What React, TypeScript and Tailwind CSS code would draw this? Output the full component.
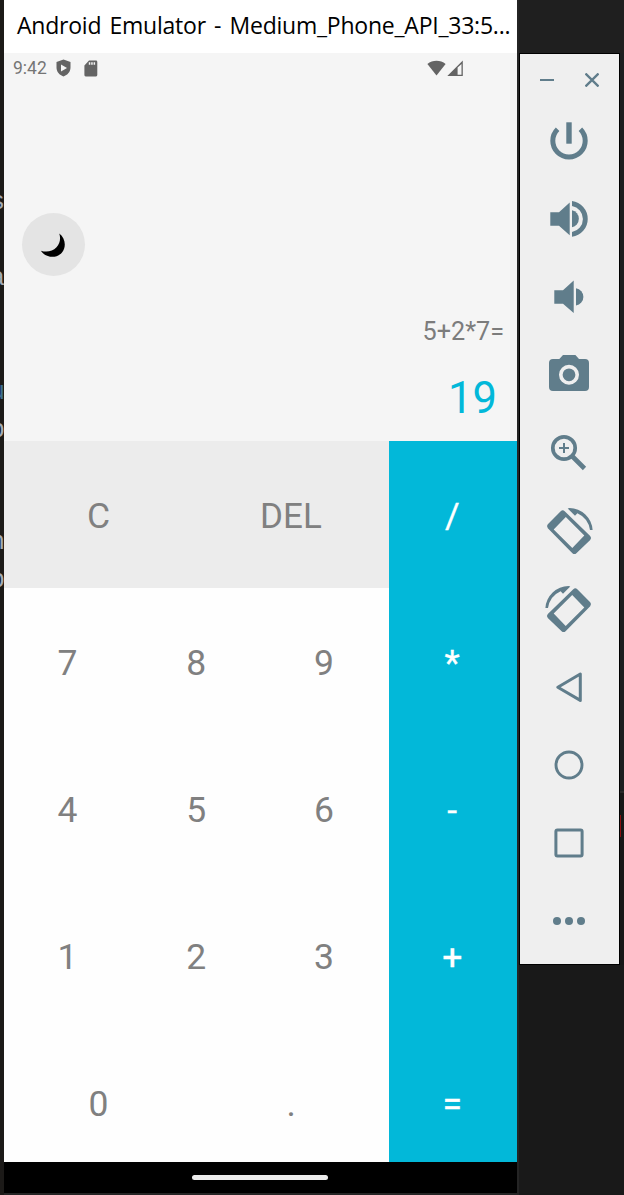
import type { ReactNode } from "react";

const keys: { label: string; nudge: string }[][] = [
  [
    { label: "7", nudge: "pr-[2px]" },
    { label: "8", nudge: "pr-[1px]" },
    { label: "9", nudge: "pr-[1px]" },
  ],
  [
    { label: "4", nudge: "pr-[2px]" },
    { label: "5", nudge: "pr-[1px]" },
    { label: "6", nudge: "pr-[1px]" },
  ],
  [
    { label: "1", nudge: "pr-[2px]" },
    { label: "2", nudge: "pr-[1px]" },
    { label: "3", nudge: "pr-[1px]" },
  ],
  [
    { label: "0", nudge: "pr-[4px]" },
    { label: ".", nudge: "pr-[3px]" },
  ],
];

const operators = ["/", "*", "-", "+", "="];

function Tool({ children }: { children: ReactNode }) {
  return (
    <button className="flex h-[78px] w-full items-center justify-center pr-[2px]">
      <svg width="48" height="48" viewBox="0 0 48 48" fill="#607d8b" className="overflow-visible">
        {children}
      </svg>
    </button>
  );
}

function RotateShape() {
  return (
    <>
      <path
        fillRule="evenodd"
        d="M15.7 4.2Q17.7 2.3 19.7 4.2L45.2 29Q47 31 45.2 33L31.4 46.2Q29.4 48 27.4 46.2L2.8 21.3Q1 19.3 2.8 17.3ZM20.8 10L8.7 22.5L27.3 41L39.3 28.6Z"
      />
      <path d="M22.7 1.5L30 8.7L32.4 6.2A22 22 0 0 1 45 23H47.6A23.5 23.5 0 0 0 24.5 1Z" />
    </>
  );
}

function TitleBar() {
  return (
    <header className="flex h-[53px] shrink-0 items-start bg-white pl-[13px]">
      <h1 className="whitespace-nowrap font-['Open_Sans','Noto_Sans',sans-serif] text-[23px] leading-[51px] tracking-[-0.23px] text-black [word-spacing:2.5px]">
        Android Emulator - Medium_Phone_API_33:5...
      </h1>
    </header>
  );
}

function StatusBar() {
  return (
    <div className="flex h-[30px] shrink-0 items-center pl-[9px] pr-[54px] text-[#646464]">
      <span className="w-[43px] text-[17.5px] leading-[30px] text-[#757575]">9:42</span>
      <svg width="15" height="18" viewBox="0 0 15 18" fill="currentColor">
        <path fillRule="evenodd" d="M7.5 .4L14.5 3V8.5C14.5 13 11.5 16 7.5 17.4C3.5 16 .5 13 .5 8.5V3ZM5 5.4V12.4L11 8.9Z" />
      </svg>
      <svg width="14" height="17" viewBox="0 0 14 17" fill="currentColor" className="ml-[13px]">
        <path fillRule="evenodd" d="M5 .6H12Q13.3 .6 13.3 2V15Q13.3 16.4 12 16.4H1.7Q.4 16.4 .4 15V5.4ZM4.800 2.300V4.800H6.300V2.300ZM7.200 2.300V4.800H8.700V2.300ZM9.600 2.300V4.800H11.100V2.300Z" />
      </svg>
      <svg width="20" height="17" viewBox="0 0 20 17" fill="currentColor" className="ml-auto">
        <path d="M9.500 15.500L.4 4C5.500 -.2 13.500 -.2 18.600 4Z" />
      </svg>
      <svg width="16" height="17" viewBox="0 0 16 17" fill="currentColor">
        <path fillRule="evenodd" d="M15.800 .4V16H.3ZM10.600 7.600V14.700H14.500V3.900Z" />
      </svg>
    </div>
  );
}

function Display() {
  return (
    <section className="flex h-[388px] shrink-0 flex-col bg-[#f5f5f5]">
      <StatusBar />
      <button className="ml-[18px] mt-[130px] flex size-[63px] shrink-0 items-center justify-center rounded-full bg-[#e4e4e4] pr-[1px]">
        <svg width="26" height="26" viewBox="0 0 26 26">
          <path d="M19.300 1.400C25.500 6 26.500 15 22 20.500C16.500 27 5.500 26 .9 18.700C6.500 20.600 12.500 19.500 16.500 15.300C20 11.500 20.900 6.500 19.300 1.400Z" />
        </svg>
      </button>
      <p className="mt-[41px] pr-[13px] text-right text-[25.2px] leading-[30px] text-[#7c7c7c]">5+2*7=</p>
      <p className="mt-[26px] pr-[20px] text-right text-[43.5px] leading-[52px] text-[#02b8d9]">19</p>
    </section>
  );
}

function Keypad() {
  return (
    <section className="flex h-[721px] shrink-0 overflow-hidden text-[35.5px] leading-[147px] text-[#808080]">
      <div className="flex w-[384.5px] shrink-0 flex-col bg-[#fefefe]">
        <div className="grid h-[147px] shrink-0 grid-cols-2 bg-[#ececec] text-center">
          <button className="pr-[3px] pt-[2px]">C</button>
          <button className="pr-[3px] pt-[2px] text-[35px]">DEL</button>
        </div>
        {keys.map((row, i) => (
          <div key={i} className="flex h-[147px] shrink-0">
            {row.map((k) => (
              <button key={k.label} className={`flex-1 basis-0 pt-[2px] ${k.nudge}`}>
                {k.label}
              </button>
            ))}
          </div>
        ))}
      </div>
      <div className="flex flex-1 flex-col bg-[#02b8d9] text-white">
        {operators.map((o) => (
          <button key={o} className="h-[147px] shrink-0 pr-[1px] pt-[2px] [-webkit-text-stroke:0.3px_white]">
            {o}
          </button>
        ))}
      </div>
    </section>
  );
}

function Toolbar() {
  return (
    <aside className="h-[912px] w-[101px] border border-black bg-[#efefef]">
      <div className="flex h-[48px] items-center gap-[31px] pl-[20px] pt-[4px]">
        <svg width="14" height="14" viewBox="0 0 14 14" stroke="#607d8b" strokeWidth="2">
          <path d="M0 7H14" />
        </svg>
        <svg width="14" height="14" viewBox="0 0 14 14" stroke="#607d8b" strokeWidth="2.3">
          <path d="M.5 .5L13.5 13.5M13.5 .5L.5 13.5" />
        </svg>
      </div>
      <Tool>
        <path d="M12.600 12.300A16.200 16.200 0 1 0 35.400 12.300" fill="none" stroke="#607d8b" strokeWidth="5" />
        <rect x="21.300" y="5.300" width="5.400" height="21.400" />
      </Tool>
      <Tool>
        <path d="M5.300 17.300H14L24.700 7.500V40.300L14 30.700H5.300Z" />
        <path d="M27 15.300A8.700 8.700 0 0 1 27 32.300Z" />
        <path d="M27 6A18.050 18.050 0 0 1 27 41.800V37A13.200 13.200 0 0 0 27 11Z" />
      </Tool>
      <Tool>
        <path d="M9.300 17.300H18L28.700 7.500V40L18 30.700H9.300Z" />
        <path d="M31 15.300A8.700 8.700 0 0 1 31 32.500Z" />
      </Tool>
      <Tool>
        <path
          fillRule="evenodd"
          d="M18 4H30.400L34 8H40Q44 8 44 12V36Q44 40 40 40H8Q4 40 4 36V12Q4 8 8 8H14.300ZM24 13.800A10 10 0 1 0 24 33.800A10 10 0 1 0 24 13.800ZM24 17.400A6.400 6.400 0 1 1 24 30.200A6.400 6.400 0 1 1 24 17.400Z"
        />
      </Tool>
      <Tool>
        <g fill="none" stroke="#607d8b">
          <circle cx="19" cy="19" r="11.200" strokeWidth="3.700" />
          <path d="M14 19H24M19 14V24" strokeWidth="2" />
          <path d="M27.500 27.500L39.500 39.500" strokeWidth="4.600" />
        </g>
      </Tool>
      <Tool>
        <RotateShape />
      </Tool>
      <Tool>
        <g transform="translate(48 0) scale(-1 1)">
          <RotateShape />
        </g>
      </Tool>
      <Tool>
        <path d="M12.800 24.200L35.300 11V37.400Z" fill="none" stroke="#607d8b" strokeWidth="3" strokeLinejoin="round" />
      </Tool>
      <Tool>
        <circle cx="24" cy="24" r="13" fill="none" stroke="#607d8b" strokeWidth="2.900" />
      </Tool>
      <Tool>
        <rect x="10.900" y="10.900" width="26.200" height="26.200" rx="1.500" fill="none" stroke="#607d8b" strokeWidth="3" />
      </Tool>
      <Tool>
        <circle cx="12" cy="24" r="4" />
        <circle cx="24" cy="24" r="4" />
        <circle cx="36" cy="24" r="4" />
      </Tool>
    </aside>
  );
}

/* Sliver of the editor window that shows beside the emulator. */
function EditorEdge() {
  return (
    <div className="flex h-full w-[4px] shrink-0 flex-col items-end overflow-hidden bg-[#1c1a18] font-['Liberation_Mono',monospace] text-[25px] leading-[38px] text-[#a4abb5]">
      <span className="mr-[-1px] mt-[184px]">s</span>
      <span className="mr-[-1px] mt-[38px]">a</span>
      <span className="mr-[-1px] mt-[76px] text-[#3f6f8f]">u</span>
      <span className="mr-[-1px]">b</span>
      <span className="mr-[-1px] mt-[74px]">n</span>
      <span className="mr-[-1px]">b</span>
    </div>
  );
}

export default function App() {
  return (
    <div className="flex h-[1195px] w-[624px] overflow-hidden bg-[#1b1b1b] font-['Roboto',sans-serif]">
      <EditorEdge />
      <main className="flex w-[513px] shrink-0 flex-col">
        <TitleBar />
        <Display />
        <Keypad />
        <footer className="flex h-[31px] shrink-0 justify-center bg-black pr-[1px] pt-[13px]">
          <div className="h-[5px] w-[136px] rounded-full bg-[#ececec]" />
        </footer>
        <div className="flex-1 bg-[#252525]" />
      </main>
      <div className="flex w-[2px] shrink-0 flex-col bg-[#242424]" />
      <div className="flex w-[105px] shrink-0 flex-col">
        <div className="h-[53px] bg-[#1f1f1f]" />
        <div className="flex">
          <Toolbar />
          <div className="flex flex-1 flex-col bg-[#171717]">
            <div className="h-[738px] bg-[#1c1f20]" />
            <div className="h-[2px] bg-[#292929]" />
            <div className="mt-[22px] h-[22px] w-px bg-[#8b1010]" />
          </div>
        </div>
        <div className="flex-1 bg-[#191919]" />
      </div>
    </div>
  );
}
